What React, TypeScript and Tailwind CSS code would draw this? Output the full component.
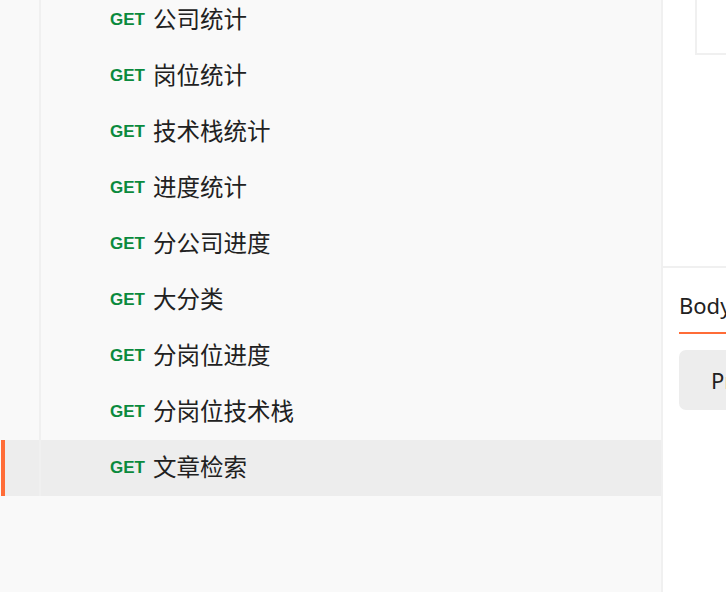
import React from "react";

const items = [
  "公司统计",
  "岗位统计",
  "技术栈统计",
  "进度统计",
  "分公司进度",
  "大分类",
  "分岗位进度",
  "分岗位技术栈",
  "文章检索",
];

const font = {
  fontFamily: '"Noto Sans", "Noto Sans CJK SC", sans-serif',
};

export default function App() {
  const active = 8;
  return (
    <div className="flex h-[592px] w-[726px] overflow-hidden bg-white" style={font}>
      {/* sidebar request tree */}
      <div className="flex w-[661px] shrink-0 flex-col bg-[#f9f9f9] pl-px">
        <div className="-mt-[8px] flex flex-col">
          {items.map((name, i) => (
            <div
              key={name}
              className={
                i === active
                  ? "flex h-[56px] items-stretch bg-[#ededed]"
                  : "flex h-[56px] items-stretch"
              }
            >
              <div
                className={
                  i === active
                    ? "w-[38px] shrink-0 border-l-4 border-[#ff6c37]"
                    : "w-[38px] shrink-0"
                }
              />
              <div className="w-[2px] shrink-0 bg-[#f0f0f0]" />
              <div className="flex items-center gap-[7px] pl-[69px]">
                <span className="w-[36px] font-['Liberation_Sans'] text-[17px] font-bold text-[#0b8a3d]">
                  GET
                </span>
                <span className="text-[23.5px] leading-none text-[#212121]">{name}</span>
              </div>
            </div>
          ))}
        </div>
      </div>
      <div className="w-[2px] shrink-0 bg-[#f0f0f0]" />
      {/* right editor pane */}
      <div className="flex min-w-0 flex-1 flex-col">
        <div className="flex h-[268px] shrink-0 border-b-2 border-[#f0f0f0] pl-[32px]">
          <div className="h-[55px] w-[200px] shrink-0 border-b-2 border-l-2 border-[#f0f0f0]" />
        </div>
        <div className="flex flex-col pl-[16px]">
          <div className="flex pt-[21px]">
            <div className="shrink-0 border-b-2 border-[#ff6c37] pr-6 pb-[10px] text-[22px] leading-[33px] text-[#212121]">
              Body
            </div>
          </div>
          <div className="mt-[16px] flex h-[60px] w-[300px] shrink-0 items-center rounded-[7px] bg-[#ededed] pl-[32px] text-[22px] text-[#212121]">
            Pretty
          </div>
        </div>
      </div>
    </div>
  );
}
